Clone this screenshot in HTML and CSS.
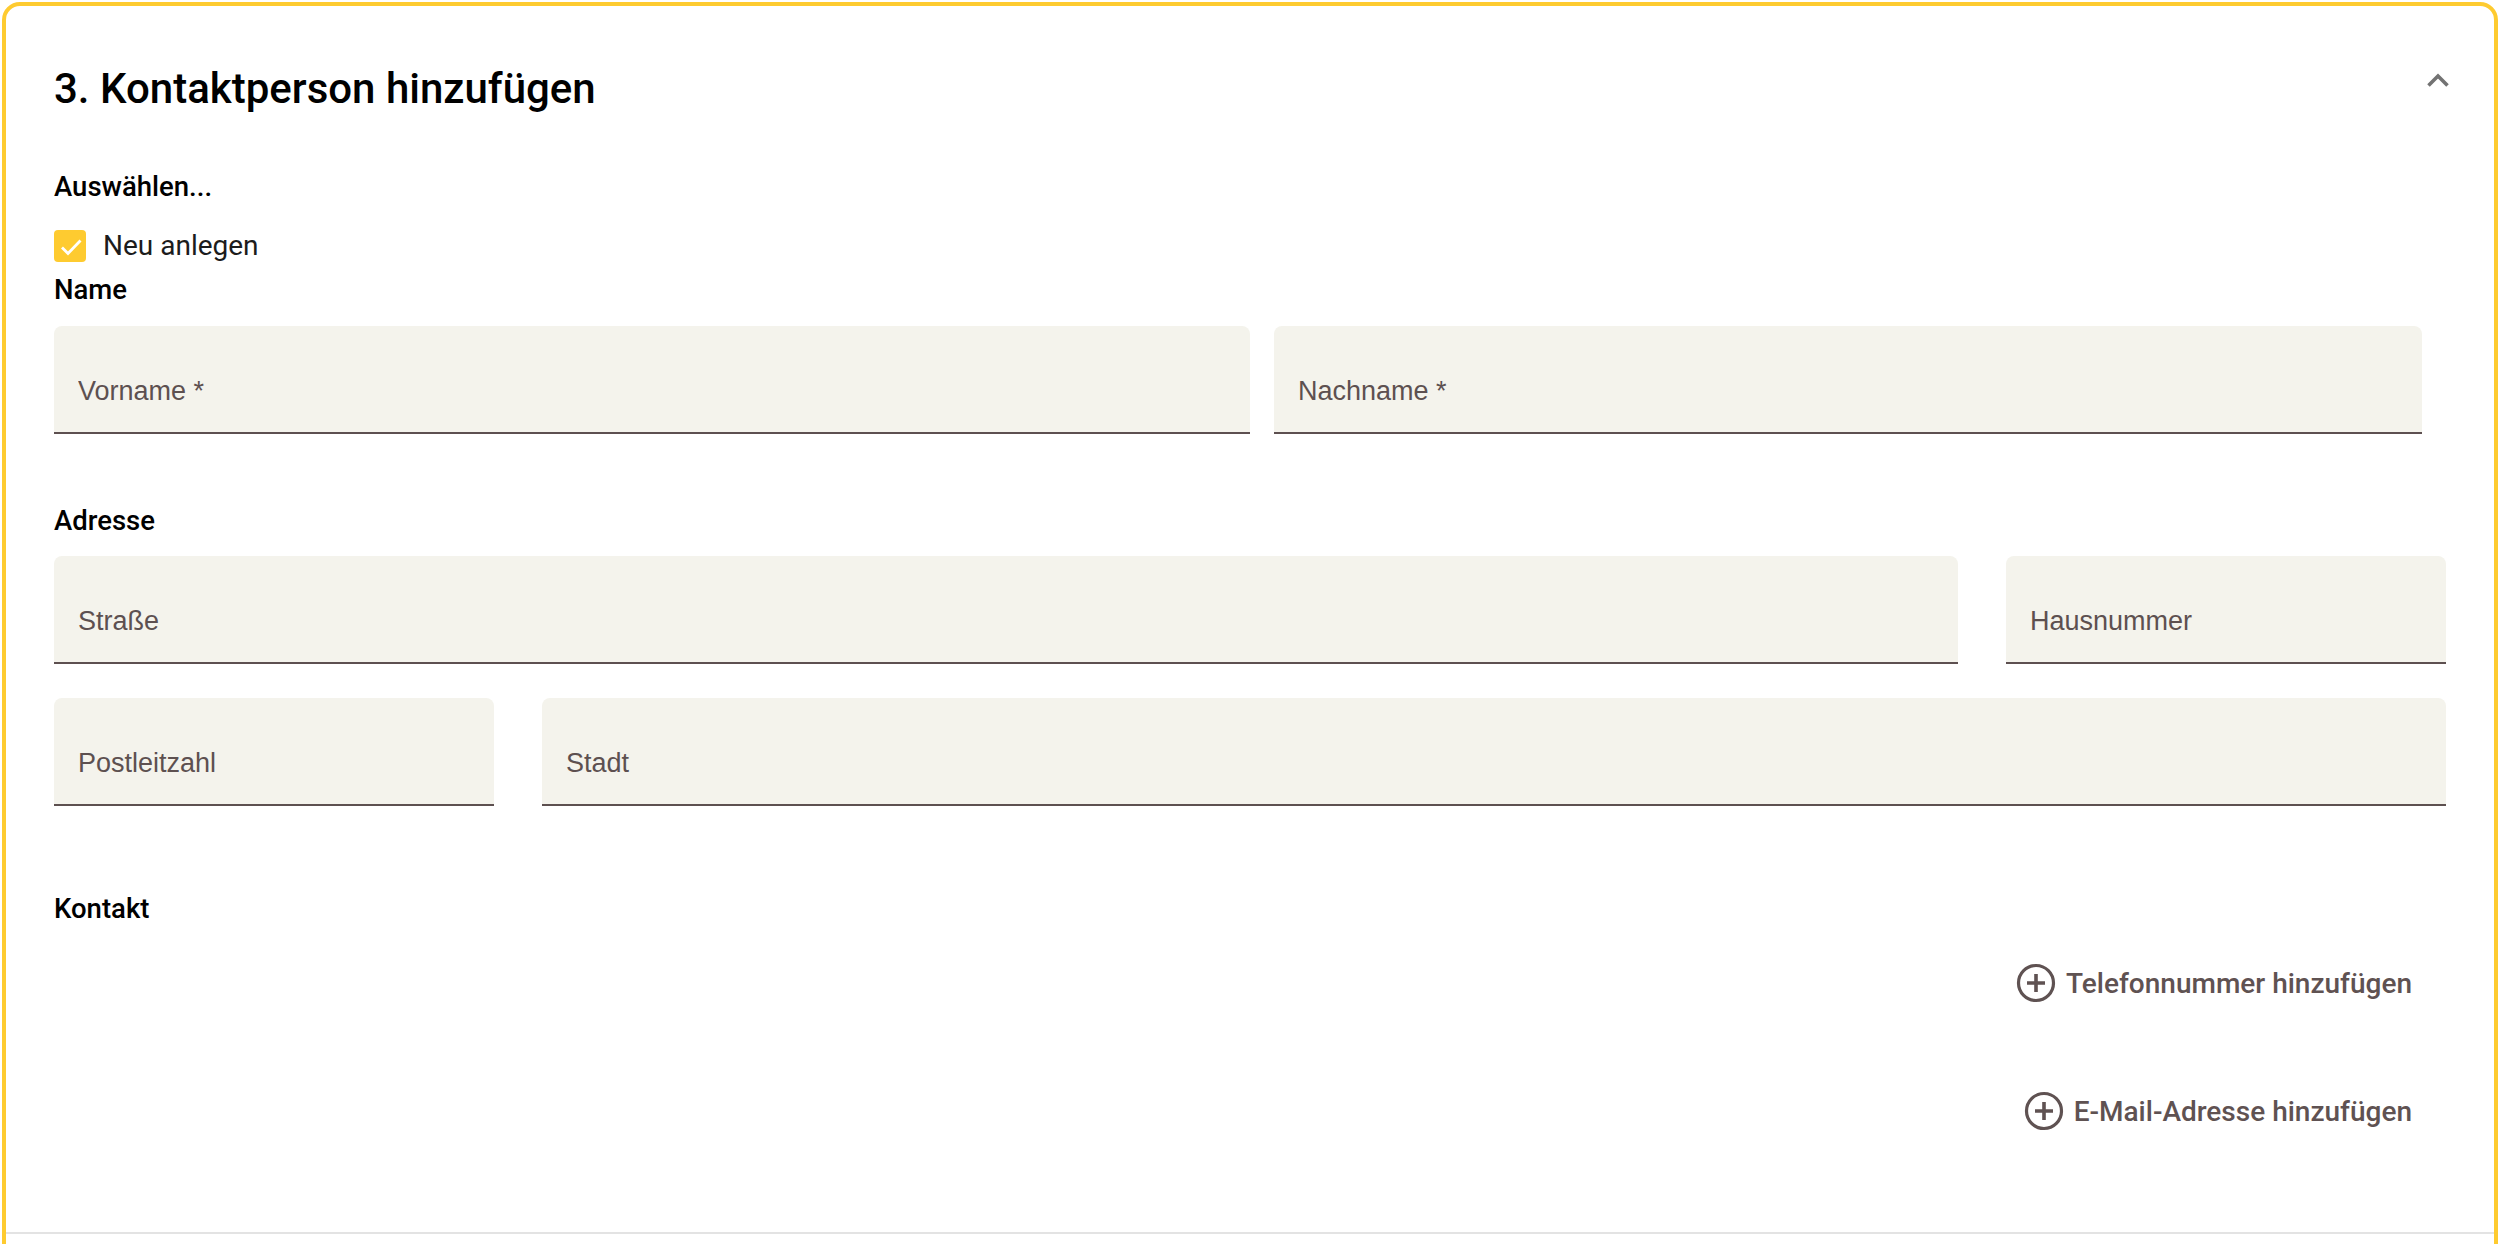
FILE: index.html
```html
<!DOCTYPE html>
<html lang="de">
  <head>
    <title>Kontaktperson hinzufügen</title>
    <meta charset="UTF-8">
    <link rel="stylesheet" href="styles.css">
  </head>

  <body>
    <section class="card">
      <div class="card-head">
        <h2 class="card-title">3. Kontaktperson hinzufügen</h2>
        <button type="button" class="collapse-btn" aria-label="Einklappen">
          <svg width="24" height="16" viewBox="0 0 24 16">
            <polyline points="2.5,13.5 12,4 21.5,13.5" fill="none" stroke="#737373" stroke-width="3.6"/>
          </svg>
        </button>
      </div>

      <form action="" name="contactForm">
        <div class="select-label">Auswählen...</div>
        <label class="check-row">
          <span class="checkmark">
            <svg width="32" height="32" viewBox="0 0 32 32">
              <polyline points="8,17.5 14,23.5 26.5,10.5" fill="none" stroke="#fff" stroke-width="2.8"/>
            </svg>
          </span>
          <span class="check-text">Neu anlegen</span>
        </label>

        <div class="group-label group-name">Name</div>
        <div class="field-row name-row">
          <input class="field" type="text" name="firstName" placeholder="Vorname *">
          <input class="field" type="text" name="lastName" placeholder="Nachname *">
        </div>

        <div class="group-label group-address">Adresse</div>
        <div class="field-row street-row">
          <input class="field" type="text" name="street" placeholder="Straße">
          <input class="field" type="text" name="houseNo" placeholder="Hausnummer">
        </div>
        <div class="field-row city-row">
          <input class="field" type="text" name="zip" placeholder="Postleitzahl">
          <input class="field" type="text" name="city" placeholder="Stadt">
        </div>

        <div class="group-label group-contact">Kontakt</div>
        <div class="actions">
          <button type="button" class="add-btn add-phone">
            <svg class="add-icon" width="40" height="40" viewBox="0 0 40 40">
              <circle cx="20" cy="20" r="17.5" fill="none" stroke="#5f5252" stroke-width="3.2"/>
              <path d="M11 20h18M20 11v18" stroke="#5f5252" stroke-width="3.6"/>
            </svg>
            Telefonnummer hinzufügen
          </button>
          <button type="button" class="add-btn add-mail">
            <svg class="add-icon" width="40" height="40" viewBox="0 0 40 40">
              <circle cx="20" cy="20" r="17.5" fill="none" stroke="#5f5252" stroke-width="3.2"/>
              <path d="M11 20h18M20 11v18" stroke="#5f5252" stroke-width="3.6"/>
            </svg>
            E-Mail-Adresse hinzufügen
          </button>
        </div>
      </form>

      <div class="card-foot"></div>
    </section>
  </body>
</html>
```

FILE: styles.css
```css
html, body {
	overflow: hidden;
}
body {
	margin: 0;
	font-family: Roboto, "Liberation Sans", sans-serif;
	color: #000;
	background: #fff;
}
button {
	font-family: inherit;
	background: none;
	border: none;
	cursor: pointer;
}

.card {
	margin: 2px 2px 0 2px;
	border: 4px solid #fecb30;
	border-radius: 18px;
	padding: 0 48px;
	min-height: 1400px;
}
.card-head {
	display: flex;
	justify-content: space-between;
	align-items: flex-start;
	padding-top: 58px;
}
.card-title {
	margin: 0;
	font-size: 42px;
	line-height: 50px;
	font-weight: 500;
}
.collapse-btn {
	margin: 4px -4px 0 0;
	padding: 0;
	width: 24px;
	height: 24px;
	display: flex;
	align-items: center;
}

.select-label, .group-label {
	font-size: 27.5px;
	line-height: 32px;
	font-weight: 500;
}
.select-label {margin-top: 57px;}
.check-row {
	margin-top: 27px;
	display: flex;
	align-items: center;
	gap: 17px;
	height: 32px;
}
.checkmark {
	width: 32px;
	height: 32px;
	border-radius: 4px;
	background: #fecb30;
	display: flex;
}
.check-text {
	font-size: 28px;
	line-height: 32px;
	color: #1c1c1c;
}
.group-name {margin-top: 12px;}
.group-address {margin-top: 71px;}
.group-contact {margin-top: 87px;}

.field-row {
	display: grid;
	column-gap: 48px;
}
.name-row {
	margin-top: 20px;
	margin-right: 24px;
	column-gap: 24px;
	grid-template-columns: 1196fr 1148fr;
}
.street-row {
	margin-top: 19px;
	grid-template-columns: 1fr 440px;
}
.city-row {
	margin-top: 34px;
	grid-template-columns: 440px 1fr;
}
.field {
	box-sizing: border-box;
	width: 100%;
	height: 108px;
	margin: 0;
	padding: 50px 24px 26px 24px;
	border: none;
	border-bottom: 2px solid #5d5050;
	border-radius: 8px 8px 0 0;
	background: #f4f3ec;
	font-family: "Liberation Sans", Arial, sans-serif;
	font-size: 27px;
	line-height: 30px;
	color: #5d5050;
	outline: none;
}
.field::placeholder {
	color: #5d5050;
	opacity: 1;
}

.actions {
	display: flex;
	flex-direction: column;
	align-items: flex-end;
}
.add-btn {
	display: flex;
	align-items: center;
	gap: 10px;
	padding: 8px 34px 8px 8px;
	font-size: 28px;
	font-weight: 500;
	color: #5f5252;
}
.add-phone {margin-top: 30px;}
.add-mail {margin-top: 72px;}
.add-icon {flex: none;}

.card-foot {
	margin: 93px -48px 0 -48px;
	border-top: 2px solid #e3e3e3;
	height: 60px;
}
```
